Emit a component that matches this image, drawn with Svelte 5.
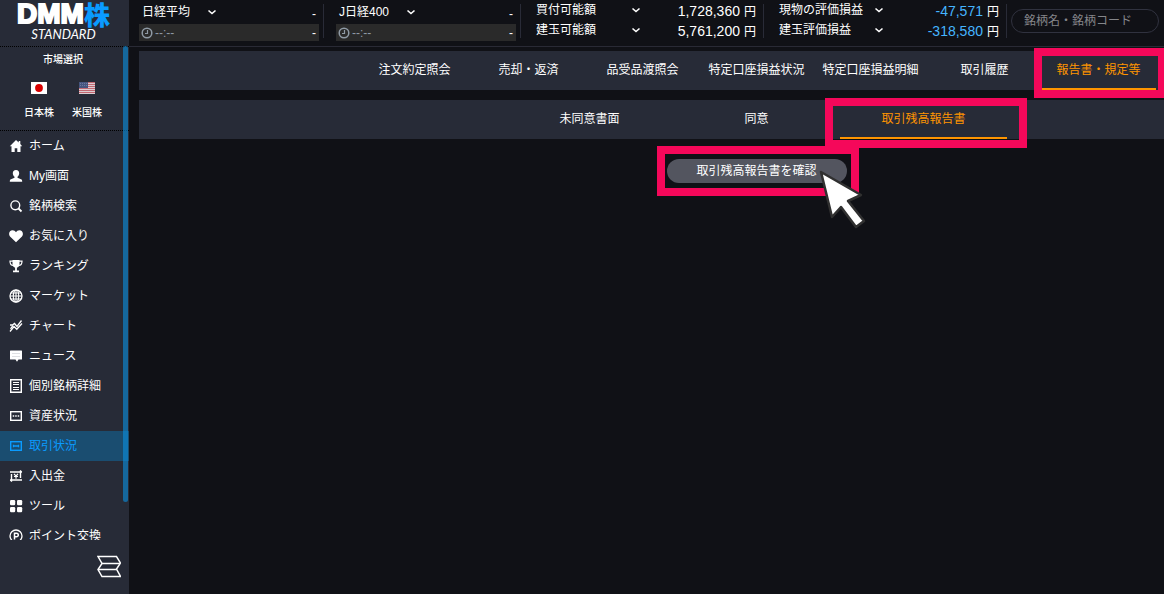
<script lang="ts">
	interface MenuItem {
		icon: string,
		label: string
	}

	const menu: MenuItem[] = [
		{ icon: 'home', label: 'ホーム' },
		{ icon: 'user', label: 'My画面' },
		{ icon: 'search', label: '銘柄検索' },
		{ icon: 'heart', label: 'お気に入り' },
		{ icon: 'trophy', label: 'ランキング' },
		{ icon: 'globe', label: 'マーケット' },
		{ icon: 'chart', label: 'チャート' },
		{ icon: 'news', label: 'ニュース' },
		{ icon: 'detail', label: '個別銘柄詳細' },
		{ icon: 'asset', label: '資産状況' },
		{ icon: 'trade', label: '取引状況' },
		{ icon: 'cash', label: '入出金' },
		{ icon: 'tool', label: 'ツール' },
		{ icon: 'point', label: 'ポイント交換' }
	];

	const indexes = ['日経平均', 'J日経400'];

	const balances = [
		[
			{ label: '買付可能額', value: '1,728,360', minus: false },
			{ label: '建玉可能額', value: '5,761,200', minus: false }
		],
		[
			{ label: '現物の評価損益', value: '-47,571', minus: true },
			{ label: '建玉評価損益', value: '-318,580', minus: true }
		]
	];

	const tabs = ['注文約定照会', '売却・返済', '品受品渡照会', '特定口座損益状況', '特定口座損益明細', '取引履歴', '報告書・規定等'];
	const subTabs = ['未同意書面', '同意', '取引残高報告書'];

	let activeMenu = $state('trade');
	let activeTab = $state('報告書・規定等');
	let activeSub = $state('取引残高報告書');
	let keyword = $state('');
</script>

{#snippet chevron()}
	<svg class="chevron" viewBox="0 0 10 10" width="10" height="10" aria-hidden="true">
		<path d="M1.5 3.5 5 6.5 8.5 3.5" fill="none" stroke="currentColor" stroke-width="1.6" />
	</svg>
{/snippet}

{#snippet menuIcon(name: string)}
	<svg class="menu-icon" viewBox="0 0 14 14" width="14" height="14" fill="none" stroke="currentColor" stroke-width="1.4" aria-hidden="true">
		{#if name === 'home'}
			<path d="M7 1 .8 7.200h1.700V13h3.200V9.200h2.600V13h3.200V7.200h1.700L11.300 5V2H9.700v1.600Z" fill="currentColor" stroke="none" />
		{:else if name === 'user'}
			<path d="M7 1C4.800 1 3.800 2.400 3.800 4.200c0 1.600.8 2.800 1.700 3.600v1L2 10.200c-.9.4-1.200 1-1.200 2.600h12.400c0-1.600-.3-2.200-1.200-2.600L8.500 8.800v-1c.9-.8 1.700-2 1.700-3.600C10.200 2.400 9.200 1 7 1Z" fill="currentColor" stroke="none" />
		{:else if name === 'search'}
			<circle cx="6.300" cy="6.300" r="4.400" />
			<path d="m9.500 9.500 3 3" stroke-width="1.800" />
		{:else if name === 'heart'}
			<path d="M7 13.300 1 7.500C-1 5 .5 1.300 3.600 1.300c1.500 0 2.700.7 3.400 2 .7-1.300 1.900-2 3.400-2 3.100 0 4.600 3.700 2.600 6.200Z" fill="currentColor" stroke="none" />
		{:else if name === 'trophy'}
			<path d="M3.500 1h7v4.500c0 2-1.500 3.200-3.500 3.200S3.500 7.500 3.500 5.500Z" fill="currentColor" stroke="none" />
			<path d="M4 2.200H1c0 2.500 1 4.300 3.500 4.300M10 2.200h3c0 2.500-1 4.300-3.500 4.300" stroke-width="1.200" />
			<path d="M7 8v4M4 12.300h6" stroke-width="1.800" />
		{:else if name === 'globe'}
			<circle cx="7" cy="7" r="6" stroke-width="1.300" />
			<ellipse cx="7" cy="7" rx="2.700" ry="6" stroke-width="1.100" />
			<path d="M7 1v12M1 7h12M2 4h10M2 10h10" stroke-width="1.100" />
		{:else if name === 'chart'}
			<path d="M1 12.500 5 7.500l2.800 2.800L13 4.500M1 6h2.500l2-1.500L8 7.500l4.500-6" stroke-width="1.300" />
			<path d="M1.500 9.800 4 6.500" stroke-width="1.300" />
		{:else if name === 'news'}
			<path d="M1.500 1.500h11a.5.5 0 0 1 .5.5v8a.5.5 0 0 1-.5.5h-3L8 12.800 6.500 10.500h-5A.5.5 0 0 1 1 10V2a.5.5 0 0 1 .5-.5Z" fill="currentColor" stroke="none" />
			<path d="M3 4.500h8M3 7.500h8" stroke="#dfe0e3" stroke-width="1" />
		{:else if name === 'detail'}
			<path d="M1.700.7h10.600v12.600H1.700Z" />
			<path d="M4 3.500h6M4 5.500h6M4 8.500h6M4 10.500h6" stroke-width="1" />
		{:else if name === 'asset'}
			<rect x="1.700" y="2.700" width="10.600" height="8.600" />
			<path d="M3.700 7h1.500M6.200 7h1.500M8.700 7h1.500" stroke-width="1.500" />
		{:else if name === 'trade'}
			<rect x="1.700" y="2.700" width="10.600" height="8.600" />
			<path d="M4 7h6M4.500 5.800v2.400M9.500 5.800v2.400" stroke-width="1.300" />
		{:else if name === 'cash'}
			<path d="M1 3h12M2.500 5v6M1 11h12M11.500 3v6M11 1.500 12.800 3M3 12.500 1.200 11" />
			<path d="m5 4.800 2 2.200 2-2.200M7 7v2.800M5 7.500h4" stroke-width="1.200" />
		{:else if name === 'tool'}
			<g fill="currentColor" stroke="none">
				<rect x="1" y="1" width="5.200" height="5.200" rx="1.200" />
				<rect x="8" y="1" width="5.200" height="5.200" rx="1.200" />
				<rect x="1" y="8" width="5.200" height="5.200" rx="1.200" />
				<rect x="8" y="8" width="5.200" height="5.200" rx="1.200" />
			</g>
		{:else}
			<circle cx="7" cy="7" r="6" stroke-width="1.300" />
			<path d="M5.500 10.500V4.200h2a1.700 1.700 0 0 1 0 3.600h-2" stroke-width="1.500" />
		{/if}
	</svg>
{/snippet}

<div class="app">
	<aside class="sidebar">
		<a class="logo" href="#home">
			<span class="logo-main">DMM<b>株</b></span>
			<span class="logo-sub">STANDARD</span>
		</a>

		<div class="sidebar-scroll">
			<section class="market">
				<h2>市場選択</h2>
				<div class="market-list">
					<button type="button">
						<svg viewBox="0 0 16 12" width="16" height="12" aria-hidden="true">
							<path fill="#fff" d="M0 0h16v12H0z" />
							<circle cx="8" cy="6" r="3.900" fill="#d80000" />
						</svg>
						日本株
					</button>
					<button type="button">
						<svg viewBox="0 0 16 12" width="16" height="12" aria-hidden="true">
							<path fill="#dccdd2" d="M0 0h16v12H0z" />
							<path stroke="#c26872" stroke-width="1" d="M0 .5h16M0 2.500h16M0 4.500h16M0 6.500h16M0 8.500h16M0 10.500h16" />
							<path fill="#46557f" d="M0 0h9v6H0z" />
							<path stroke="#6b78a0" stroke-width="1" stroke-dasharray="1 1" d="M1 1.500h7M1 3.500h7" />
						</svg>
						米国株
					</button>
				</div>
			</section>

			<nav class="menu">
				{#each menu as item}
					<button type="button" class:active={activeMenu === item.icon} onclick={() => activeMenu = item.icon}>
						{@render menuIcon(item.icon)}
						{item.label}
					</button>
				{/each}
			</nav>
			<span class="scroll-thumb"></span>
		</div>

		<div class="sidebar-foot">
			<button type="button" aria-label="メニューを切り替え">
				<svg viewBox="0 0 24 24" width="24" height="24" fill="none" stroke="#fff" stroke-width="1.500">
					<path d="M1 1.500h18.500L23.500 8l-4 6 4 7.500H5L1 14.500l4-6Z" />
					<path d="M5 8.500h18M1.500 14.500h18" />
				</svg>
			</button>
		</div>
	</aside>

	<div class="content">
		<header class="topbar">
			{#each indexes as name}
				<div class="index">
					<div class="index-head">
						<button type="button">{name}{@render chevron()}</button>
						<span>-</span>
					</div>
					<div class="index-time">
						<svg viewBox="0 0 12 12" width="12" height="12" fill="none" stroke="currentColor" stroke-width="1.500" aria-hidden="true">
							<circle cx="6" cy="6" r="4.800" />
							<path d="M6.500 3v3.500H4" stroke-width="1.200" />
						</svg>
						<time>--:--</time>
						<span>-</span>
					</div>
				</div>
			{/each}

			{#each balances as group}
				<div class="balance">
					{#each group as row}
						<div class="balance-row">
							<button type="button">{row.label}{@render chevron()}</button>
							<span class="amount"><span class:minus={row.minus}>{row.value}</span><small>円</small></span>
						</div>
					{/each}
				</div>
			{/each}

			<div class="search">
				<input type="text" aria-label="銘柄検索" placeholder="銘柄名・銘柄コード" bind:value={keyword} />
			</div>
		</header>

		<main>
			<nav class="tabs">
				{#each tabs as tab}
					<button type="button" class:active={activeTab === tab} onclick={() => activeTab = tab}>{tab}</button>
				{/each}
			</nav>
			<nav class="tabs sub">
				{#each subTabs as tab}
					<button type="button" class:active={activeSub === tab} onclick={() => activeSub = tab}>{tab}</button>
				{/each}
			</nav>
			<div class="report">
				<div class="report-action">
					<button type="button">取引残高報告書を確認</button>
					<svg class="pointer" viewBox="0 0 48 60" width="48" height="60" aria-hidden="true">
						<path d="M2 2 42 25 29 31 45 51 37 57 22 37 13 47Z" fill="#fff" stroke="#303030" stroke-width="2.500" stroke-linejoin="round" />
					</svg>
				</div>
			</div>
		</main>
	</div>
</div>

<style>
	:global(body) {
		margin: 0;
		background: #101116;
	}

	.app {
		display: flex;
		height: 100vh;
		overflow: hidden;
		color: #fff;
		font-family: "Liberation Sans", "Noto Sans CJK JP", sans-serif;
		font-size: 12px;
		line-height: 20px;
	}

	button {
		padding: 0;
		border: 0;
		background: none;
		color: inherit;
		font: inherit;
		white-space: nowrap;
		cursor: pointer;
	}

	svg {
		flex: none;
	}

	/* sidebar */
	.sidebar {
		display: flex;
		flex-direction: column;
		flex: none;
		width: 129px;
		background: #272b37;
	}

	.logo {
		display: flex;
		flex-direction: column;
		align-items: center;
		height: 46px;
		padding-right: 2px;
		color: #fff;
		text-decoration: none;
	}

	.logo-main {
		display: flex;
		align-items: center;
		height: 28px;
		font-size: 28px;
		font-weight: 700;
		line-height: 28px;
		-webkit-text-stroke: 2px #fff;
	}

	.logo-main b {
		color: #0a9bff;
		font-family: "Noto Sans CJK JP", sans-serif;
		font-size: 26px;
		font-weight: 900;
		-webkit-text-stroke: 0;
	}

	.logo-sub {
		font-family: Lato, sans-serif;
		font-size: 13px;
		font-style: italic;
		font-weight: 400;
		line-height: 12px;
	}

	.sidebar-scroll {
		position: relative;
		flex: 1;
		min-height: 0;
		overflow: hidden;
	}

	.scroll-thumb {
		position: absolute;
		top: 0;
		right: 1px;
		width: 5px;
		height: 456px;
		border-radius: 3px;
		background: rgba(10, 145, 225, 0.6);
	}

	.market {
		border: 1px dotted #000;
		border-width: 1px 0;
		padding: 3px 3px 5px 0;
		font-size: 10px;
	}

	.market h2 {
		margin: 0 0 12px;
		font-size: 10px;
		font-weight: 500;
		text-align: center;
	}

	.market-list {
		display: flex;
		justify-content: center;
		gap: 18px;
	}

	.market-list button {
		display: flex;
		flex-direction: column;
		align-items: center;
		gap: 9px;
		padding-bottom: 2px;
		font-weight: 500;
	}

	.menu button {
		display: flex;
		align-items: center;
		gap: 6px;
		width: 100%;
		height: 30px;
		padding-left: 9px;
	}

	.menu button.active {
		background: #1a4d70;
		color: #0a9bff;
	}

	.sidebar-foot {
		display: flex;
		justify-content: flex-end;
		flex: none;
		height: 39px;
		padding: 15px 8px 0;
	}

	.sidebar-foot button {
		height: 24px;
	}

	.sidebar-foot svg {
		display: block;
	}

	/* header */
	.content {
		flex: 1;
		min-width: 0;
	}

	.topbar {
		display: flex;
		box-sizing: border-box;
		height: 47px;
		padding-left: 10px;
		border-bottom: 1px solid #292a35;
	}

	.index,
	.balance {
		position: relative;
		flex: none;
	}

	.index::after,
	.balance::after {
		content: "";
		position: absolute;
		top: 4px;
		right: 0;
		width: 1px;
		height: 34px;
		background: #292b37;
	}

	.index {
		width: 180px;
		margin-right: 12px;
		padding-right: 5px;
	}

	.index-head,
	.index-time {
		display: flex;
		align-items: center;
		justify-content: space-between;
		padding: 0 3px;
	}

	.index-head {
		height: 24px;
	}

	.index-head > span {
		padding-top: 4px;
	}

	.index-head button {
		display: flex;
		align-items: center;
		gap: 17px;
	}

	.index-time {
		gap: 2px;
		height: 17px;
		padding-left: 2px;
		background: #2a2a2a;
	}

	.index-time svg,
	time {
		color: #8f9aa5;
	}

	time {
		flex: 1;
	}

	.balance {
		width: 220px;
		margin-left: 3px;
		padding-right: 8px;
	}

	.balance + .balance {
		margin-left: 15px;
	}

	.balance-row {
		display: flex;
		align-items: center;
		justify-content: space-between;
		height: 20px;
	}

	.balance-row button {
		display: flex;
		align-items: center;
		justify-content: space-between;
		width: 105px;
	}

	.amount {
		display: flex;
		align-items: baseline;
		gap: 4px;
		padding-top: 2px;
		font-size: 14px;
	}

	.amount small {
		font-size: 12px;
	}

	.amount .minus {
		color: #45b5ff;
	}

	.search {
		flex: 1;
		min-width: 0;
		padding: 9px 5px 0 4px;
	}

	.search input {
		box-sizing: border-box;
		width: 100%;
		height: 24px;
		padding: 0 12px;
		border: 1px solid #30323f;
		border-radius: 12px;
		background: transparent;
		color: #fff;
		font: inherit;
		outline: none;
	}

	.search input::placeholder {
		color: #85868a;
		opacity: 1;
	}

	/* tabs */
	main {
		padding: 4px 0 0 10px;
	}

	.tabs {
		display: flex;
		justify-content: center;
		height: 39px;
		margin-bottom: 10px;
		padding-left: 210px;
		background: #272b37;
	}

	.tabs button {
		position: relative;
		box-sizing: border-box;
		width: 114px;
		border-bottom: 2px solid transparent;
	}

	.tabs.sub button {
		width: 167px;
	}

	.tabs .active {
		border-color: #ff9500;
		color: #ff9500;
	}

	/* guide frames drawn over the highlighted controls */
	.tabs .active::after,
	.report-action::after {
		content: "";
		position: absolute;
		border: 8px solid #f5085a;
		pointer-events: none;
	}

	.tabs .active::after {
		inset: -3px -10px -10px -8px;
	}

	.tabs.sub .active::after {
		inset: -2px -20px -11px -15px;
	}

	.report {
		display: flex;
		justify-content: center;
		padding: 10px 0 0 210px;
	}

	.report-action {
		position: relative;
	}

	.report-action button {
		display: block;
		width: 180px;
		height: 24px;
		border-radius: 12px;
		background: #53555f;
	}

	.report-action::after {
		inset: -13px -12px -13px -10px;
	}

	.pointer {
		position: absolute;
		z-index: 1;
		top: 11px;
		left: 152px;
	}
</style>
